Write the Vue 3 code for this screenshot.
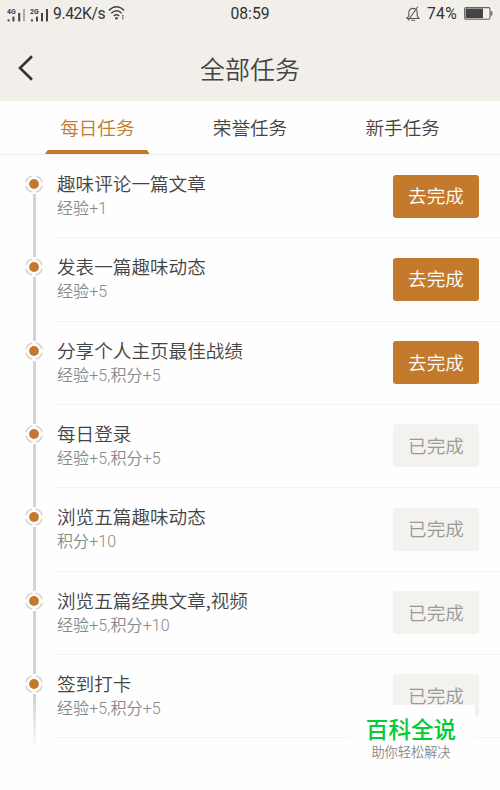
<template>
  <div class="page">
    <header class="top">
      <div class="status">
        <div class="status-left">
          <svg class="signals" width="46" height="20" viewBox="0 0 46 20">
            <g fill="#444">
              <rect x=".6" y="16.4" width="2" height="2" />
              <rect x="5.4" y="13.6" width="2" height="4.8" />
              <rect x="11.2" y="10" width="2" height="8.4" />
              <rect x="16" y="6" width="2" height="12.4" fill="#aaa" />
              <rect x="24" y="16.4" width="2" height="2" />
              <rect x="29" y="13.6" width="2" height="4.8" />
              <rect x="34" y="10" width="2" height="8.4" />
              <rect x="39" y="6" width="2" height="12.4" />
            </g>
            <text x="0" y="10.6" class="net">4G</text>
            <text x="23" y="10.6" class="net">2G</text>
          </svg>
          <span class="speed">9.42K/s</span>
          <svg class="wifi" width="18" height="16" viewBox="0 0 18 16" fill="none" stroke="#444" stroke-width="1.4">
            <path d="M.8 5.5Q8.5-1.8 16.2 5.5M3.3 8.3Q8.5 3.3 13.7 8.3M5.8 11Q8.5 8.5 11.2 11" />
            <circle cx="8.5" cy="13.2" r="1.3" fill="#444" stroke="none" />
            <path d="M14.8 10v1.8M14.8 12.4v1.8" stroke-width="1.6" stroke="#777" />
          </svg>
        </div>
        <span class="clock">08:59</span>
        <div class="status-right">
          <svg width="14" height="16" viewBox="0 0 14 16" fill="none" stroke="#555" stroke-width="1.1">
            <path d="M.8 12.5H13L11.2 10V6.5Q11.2 2.8 7 2.2Q2.8 2.8 2.8 6.5V10ZM5.3 14.3H8.8M11.7.8L2 14.8" />
          </svg>
          <span class="percent">74%</span>
          <svg width="29" height="13" viewBox="0 0 29 13">
            <rect x=".6" y=".6" width="25.4" height="11.6" rx="1.4" fill="none" stroke="#666" stroke-width="1.1" />
            <rect x="1.6" y="1.6" width="17.4" height="9.6" fill="#444" />
            <rect x="26.5" y="4.3" width="1.8" height="4.2" fill="#666" />
          </svg>
        </div>
      </div>
      <div class="nav">
        <svg class="back" width="16" height="26" viewBox="0 0 16 26">
          <path d="M14 1.3L2 13L14 24.7" fill="none" stroke="#333" stroke-width="2.6" />
        </svg>
        <h1>全部任务</h1>
      </div>
    </header>

    <nav class="tabs">
      <div v-for="(tab, i) in tabs" :key="tab" class="tab" :class="{ active: i === current }" @click="current = i">
        {{ tab }}
      </div>
    </nav>

    <ul class="tasks">
      <li v-for="task in tasks" :key="task.name" class="task">
        <div class="rail">
          <svg class="node" width="20" height="20" viewBox="0 0 20 20">
            <circle class="ring" cx="10" cy="10" r="8.2" pathLength="100" />
            <circle cx="10" cy="10" r="4.9" fill="#c47a2c" />
          </svg>
          <i class="line"></i>
        </div>
        <div class="body">
          <div class="info">
            <div class="name">{{ task.name }}</div>
            <div class="reward">{{ task.reward }}</div>
          </div>
          <button class="btn" :class="{ done: task.done }">{{ task.done ? '已完成' : '去完成' }}</button>
        </div>
      </li>
    </ul>

    <div class="brand">
      <div class="brand-name">百科全说</div>
      <div class="brand-sub">助你轻松解决</div>
    </div>
  </div>
</template>

<script setup>
import { ref } from 'vue'

const tabs = ['每日任务', '荣誉任务', '新手任务']
const current = ref(0)

const tasks = [
  { name: '趣味评论一篇文章', reward: '经验+1', done: false },
  { name: '发表一篇趣味动态', reward: '经验+5', done: false },
  { name: '分享个人主页最佳战绩', reward: '经验+5,积分+5', done: false },
  { name: '每日登录', reward: '经验+5,积分+5', done: true },
  { name: '浏览五篇趣味动态', reward: '积分+10', done: true },
  { name: '浏览五篇经典文章,视频', reward: '经验+5,积分+10', done: true },
  { name: '签到打卡', reward: '经验+5,积分+5', done: true }
]
</script>

<style>
body {
  margin: 0;
  background: #fefefe;
}
</style>

<style scoped>
.page {
  position: relative;
  width: 500px;
  height: 790px;
  overflow: hidden;
  background: #fefefe;
  color: #444;
  font-family: 'Noto Sans CJK SC', sans-serif;
  font-weight: 350;
}
.top {
  height: 101px;
  background: #f2efea;
}
.status {
  display: grid;
  grid-template-columns: 1fr auto 1fr;
  align-items: center;
  height: 27px;
  padding: 0 7px;
  font-family: Roboto, sans-serif;
  font-size: 15.7px;
  font-weight: 400;
  color: #333;
}
.status-left,
.status-right {
  display: flex;
  align-items: center;
}
.status-right {
  justify-content: flex-end;
}
.signals {
  margin-top: -1px;
}
.net {
  font: 700 7px Roboto, sans-serif;
  fill: #444;
}
.speed {
  letter-spacing: -0.4px;
}
.wifi {
  margin: -2px 0 0 3px;
}
.percent {
  margin: 0 7px 0 7px;
  letter-spacing: 0.3px;
}
.nav {
  display: grid;
  grid-template-columns: 1fr auto 1fr;
  align-items: center;
  height: 82px;
}
.back {
  margin-left: 18px;
}
h1 {
  margin: 0;
  font-size: 25px;
  line-height: 36px;
  font-weight: 350;
}
.tabs {
  display: flex;
  height: 53px;
  padding: 0 21px;
  border-bottom: 1px solid #eee;
}
.tab {
  display: flex;
  flex: 1;
  flex-direction: column;
  align-items: center;
  font-size: 18.6px;
  line-height: 51px;
}
.tab.active {
  color: #c47a2c;
}
.tab.active::after {
  content: '';
  width: 105px;
  height: 4px;
  margin-top: -2px;
  background: #c47a2c;
  clip-path: polygon(3px 0, 102px 0, 100% 100%, 0 100%);
}
.tasks {
  margin: 0;
  padding: 0 0 0 24px;
  list-style: none;
}
.task {
  display: flex;
  height: 83.33px;
}
.rail {
  display: flex;
  flex-direction: column;
  align-items: center;
  width: 20px;
  height: 83.33px;
  margin-top: 19px;
}
.node {
  flex-shrink: 0;
}
.ring {
  fill: none;
  stroke: #d6d6d6;
  stroke-width: 1.6;
  stroke-dasharray: 18 7;
  stroke-dashoffset: -3.5;
}
.line {
  flex: 1;
  width: 3px;
  background: #d4d4d4;
}
.task:last-child .line {
  flex: none;
  height: 56px;
  background: linear-gradient(#d0d0d0, #fefefe);
}
.body {
  display: flex;
  flex: 1;
  justify-content: space-between;
  box-sizing: border-box;
  height: 83.33px;
  margin-left: 13px;
  padding: 14px 21px 0 0;
  border-bottom: 1px solid #f3f3f3;
}
.name {
  font-size: 18.6px;
  line-height: 28px;
}
.reward {
  font-family: Roboto, 'Noto Sans CJK SC', sans-serif;
  font-size: 16px;
  line-height: 24px;
  letter-spacing: 0.1px;
  color: #888;
}
.btn {
  width: 86px;
  height: 43px;
  margin-top: 5.5px;
  padding: 0 0 2px;
  border: 0;
  border-radius: 3px;
  background: #c47a2c;
  color: #fff;
  font: inherit;
  font-size: 18.6px;
  line-height: 40px;
}
.btn.done {
  background: #f3f2ee;
  color: #999;
}
/* Site badge laid over the bottom corner of the list */
.brand {
  position: absolute;
  left: 350px;
  top: 705px;
  width: 125px;
  height: 85px;
  box-sizing: border-box;
  padding: 7px 3px 0 0;
  background: #fefefe;
  text-align: center;
}
.brand-name {
  font-size: 22.6px;
  line-height: 33px;
  font-weight: 500;
  color: #0c3;
}
.brand-sub {
  font-size: 13.2px;
  line-height: 13px;
  font-weight: 350;
  color: #888;
}
</style>
